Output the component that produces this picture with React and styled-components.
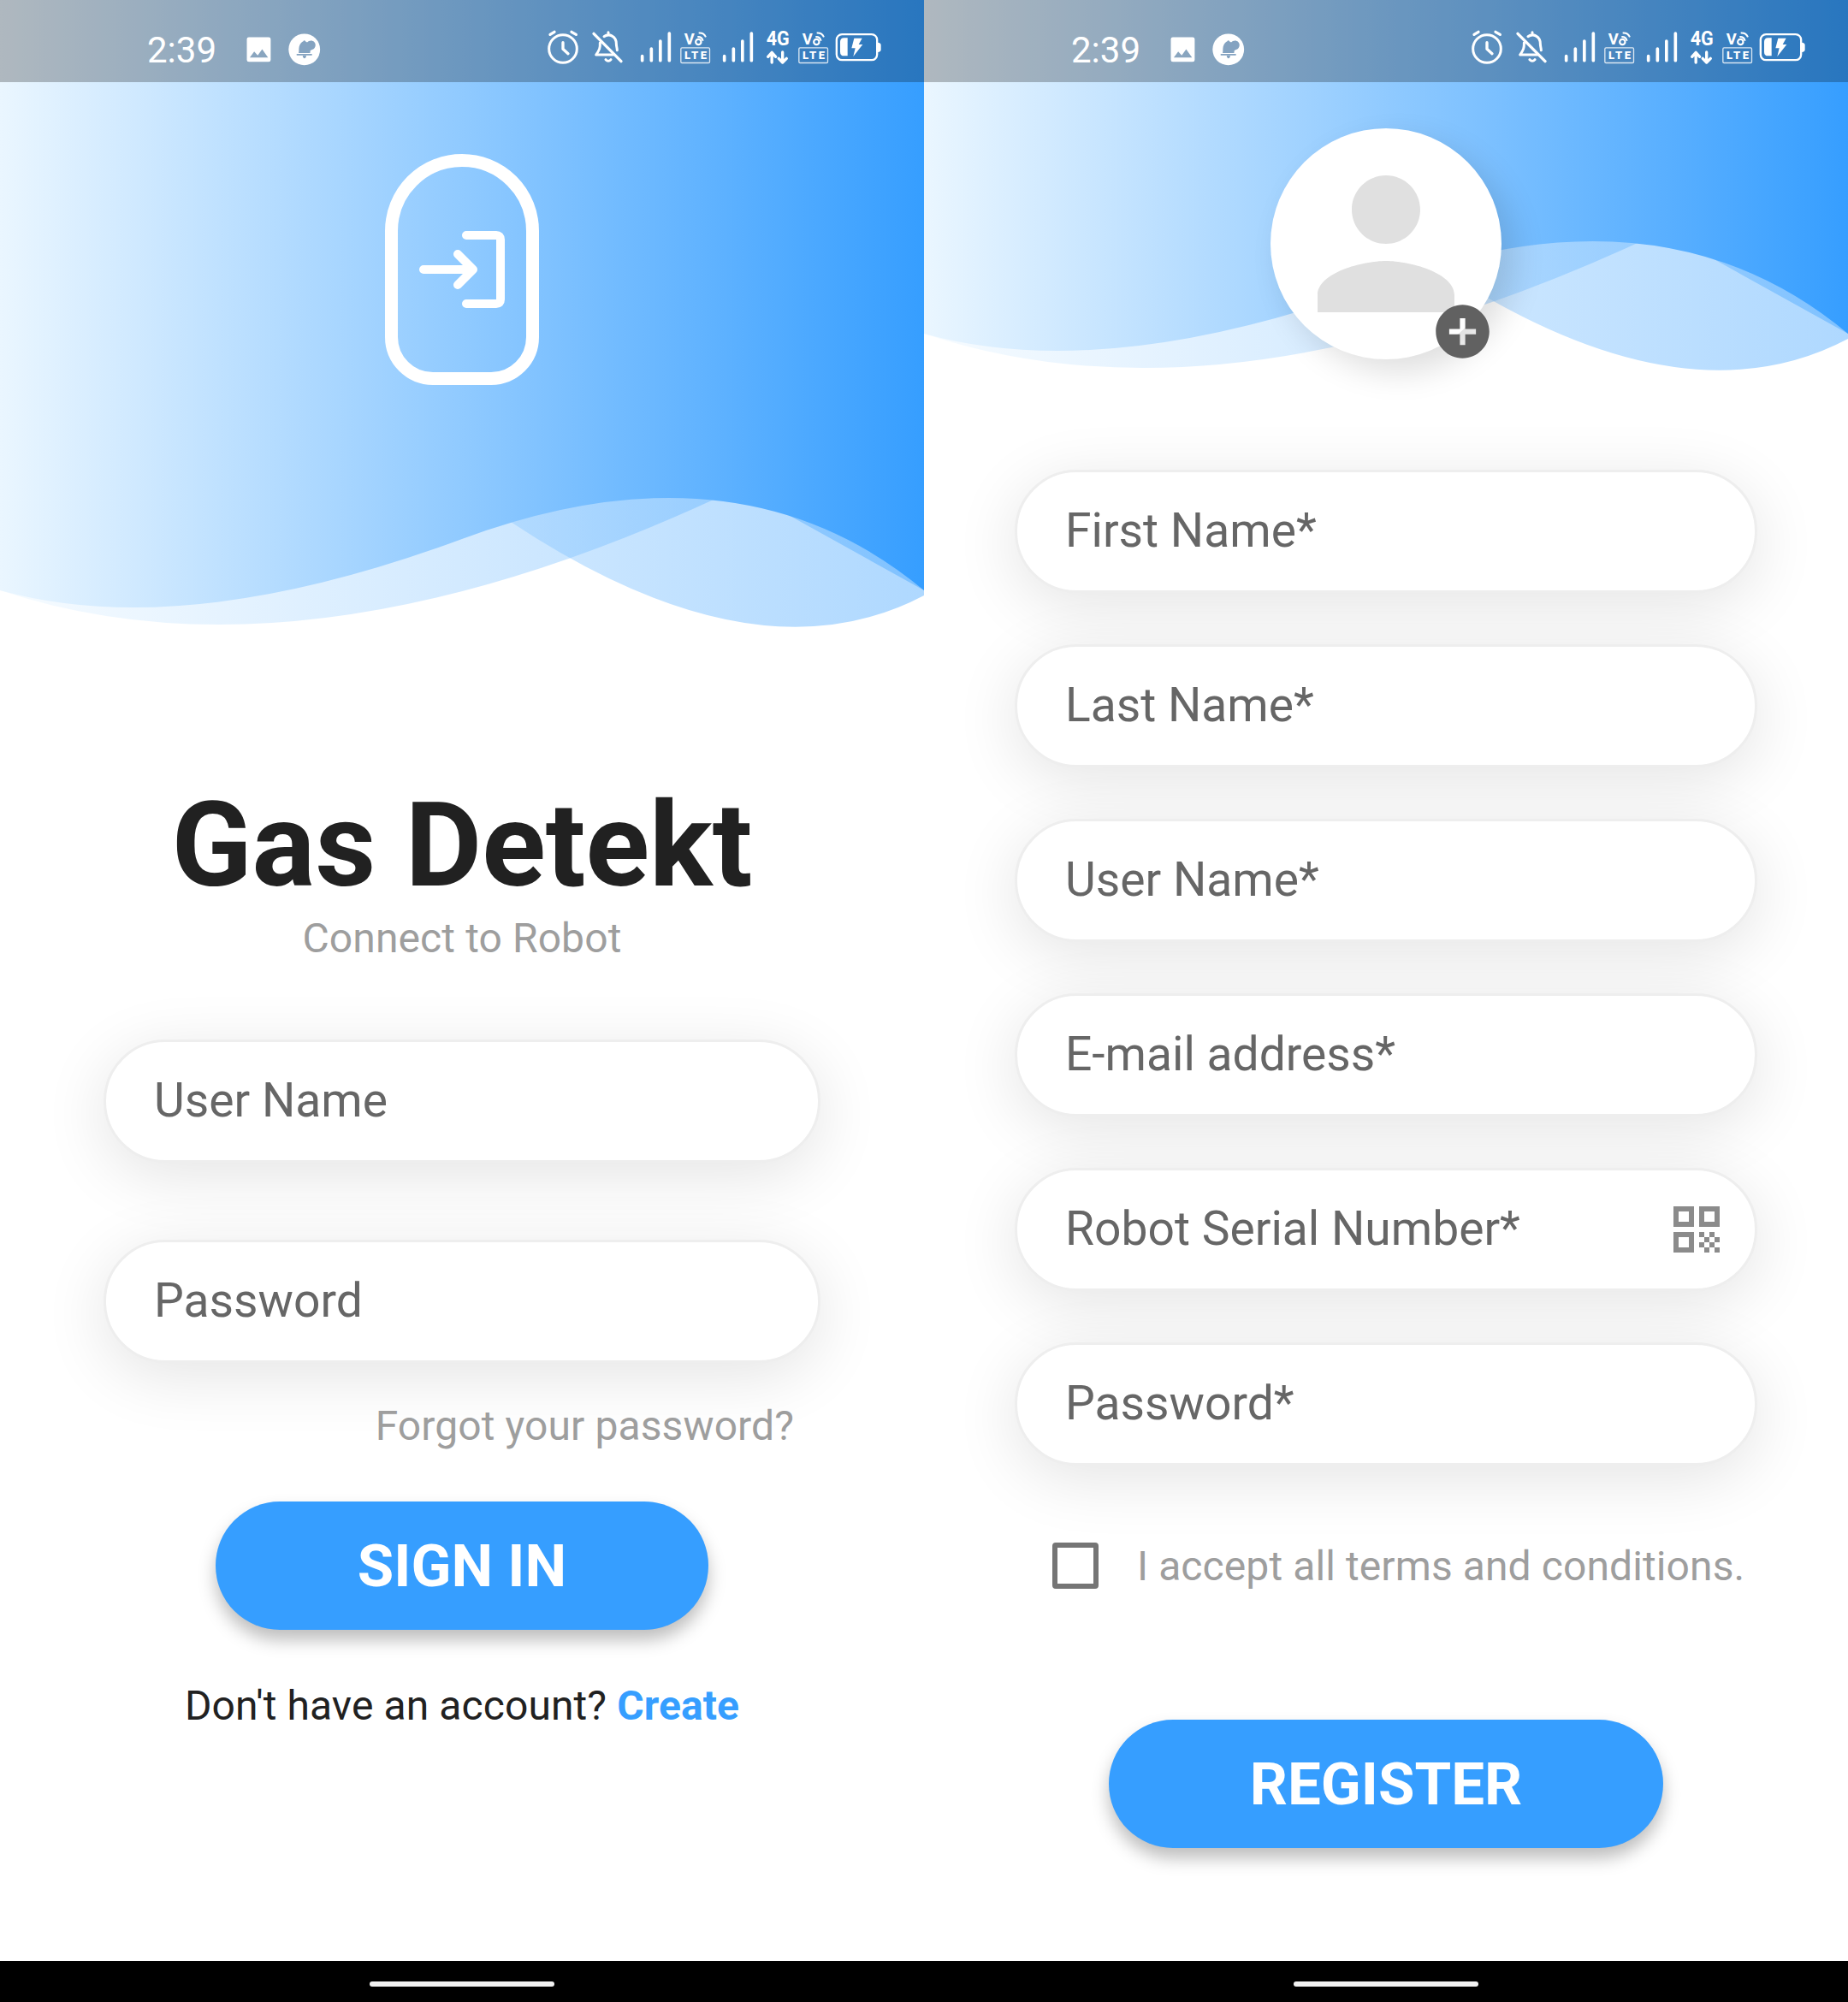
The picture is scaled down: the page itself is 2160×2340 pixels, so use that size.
import React from "react";
import styled, { createGlobalStyle } from "styled-components";

const GlobalStyle = createGlobalStyle`
  *, *::before, *::after { box-sizing: border-box; }
  html, body { margin: 0; padding: 0; background: #fff; }
  body { font-family: Roboto, "Noto Sans", sans-serif; }
`;

const accent = "#369eff";

const Board = styled.main`
  display: grid;
  grid-template-columns: 1080px 1080px;
  width: 2160px;
  height: 2340px;
  overflow: hidden;
`;

const Phone = styled.section`
  display: flex;
  flex-direction: column;
  width: 1080px;
  height: 2340px;
  overflow: hidden;
  background: #fff;
`;

const Header = styled.header`
  position: relative;
  display: flex;
  flex-direction: column;
  align-items: center;
  flex: none;
  height: ${(p) => p.$height}px;
`;

const Waves = styled.svg`
  position: absolute;
  inset: 0;
  width: 100%;
  height: 100%;
`;

const StatusBar = styled.div`
  position: relative;
  display: flex;
  justify-content: space-between;
  align-items: flex-start;
  width: 100%;
  height: 96px;
  padding: 30px 47px 0 172px;
  background: rgba(0, 0, 0, 0.25);
  color: #fff;
`;

const StatusGroup = styled.div`
  display: flex;
  align-items: flex-start;
  height: 52px;
`;

const Clock = styled.span`
  width: 110.5px;
  font-size: 42px;
  line-height: 58px;
  white-space: nowrap;
`;

const Glyph = styled.svg`
  display: block;
  flex: none;
  width: ${(p) => p.$w / 3}px;
  height: 50px;
  overflow: visible;
  font-family: Roboto, sans-serif;
`;

const Notice = styled(Glyph)`
  width: ${(p) => p.$w / 2.904}px;
  height: 51.65px;
  margin-top: 1px;
`;

const LogoBadge = styled.div`
  position: relative;
  display: flex;
  justify-content: center;
  align-items: center;
  width: 180px;
  height: 270px;
  margin-top: 84px;
  border: 15px solid #fff;
  border-radius: 90px 90px 56px 56px;
`;

const LogoIcon = styled.svg`
  display: block;
  width: 120px;
  height: 120px;
`;

const Avatar = styled.div`
  position: relative;
  display: flex;
  justify-content: center;
  width: 270px;
  height: 270px;
  margin-top: 54px;
  padding-top: 15px;
  border-radius: 50%;
  background: #fff;
  box-shadow: 15px 15px 37px rgba(0, 0, 0, 0.13);
`;

const PersonIcon = styled.svg`
  width: 240px;
  height: 240px;
  fill: #e0e0e0;
`;

const AddBadge = styled.svg`
  position: absolute;
  left: 187px;
  top: 200px;
  width: 75px;
  height: 75px;
  fill: #616161;
`;

const Content = styled.div`
  display: flex;
  flex-direction: column;
  align-items: center;
  flex: 1;
  padding-top: ${(p) => p.$top}px;
`;

const Title = styled.h1`
  margin: 0;
  font-size: 138px;
  font-weight: 700;
  line-height: 161px;
  color: #212121;
  white-space: nowrap;
`;

const Caption = styled.p`
  margin: 0;
  font-size: 48px;
  line-height: 56px;
  letter-spacing: 0.1px;
  color: ${(p) => (p.$dark ? "#212121" : "#9e9e9e")};
  white-space: nowrap;
`;

const Forgot = styled(Caption)`
  align-self: flex-end;
  margin: 46px 152px 60px 0;
`;

const Link = styled.span`
  font-weight: 700;
  color: ${accent};
`;

const FieldList = styled.div`
  display: flex;
  flex-direction: column;
  width: ${(p) => p.$width}px;
  gap: ${(p) => p.$gap}px;
  margin-top: ${(p) => p.$top || 0}px;
`;

const Field = styled.label`
  display: flex;
  align-items: center;
  justify-content: space-between;
  height: 144px;
  padding: 0 30px 3px 56px;
  border: 3px solid #eee;
  border-radius: 72px;
  background: #fff;
  box-shadow: 0 15px 76px rgba(0, 0, 0, 0.11);
  font-size: 55.2px;
  color: #666;
  white-space: nowrap;
`;

const QrIcon = styled.svg`
  width: 72px;
  height: 72px;
  margin: 3px 2px 0 0;
  fill: #8b8b8b;
`;

const Button = styled.button`
  width: ${(p) => p.$width}px;
  height: 150px;
  padding: 0;
  border: 0;
  border-radius: 75px;
  background: ${accent};
  box-shadow: 0 12px 20px rgba(0, 0, 0, 0.26);
  font-family: inherit;
  font-size: 69px;
  font-weight: 700;
  color: #fff;
`;

const Terms = styled.label`
  display: flex;
  align-items: center;
  align-self: flex-start;
  gap: 45px;
  height: 54px;
  margin: 90px 0 153px 150px;
`;

const TermsText = styled(Caption)`
  padding-top: 2px;
`;

const Checkbox = styled.span`
  width: 54px;
  height: 54px;
  border: 6px solid #757575;
  border-radius: 4px;
`;

const SignUp = styled(Caption)`
  margin-top: 61px;
`;

const NavBar = styled.footer`
  display: flex;
  justify-content: center;
  align-items: center;
  flex: none;
  height: 48px;
  padding-top: 5px;
  background: #000;
`;

const Handle = styled.span`
  width: 216px;
  height: 6px;
  border-radius: 3px;
  background: #f2f2f2;
`;

function SignalIcon() {
  return (
    <Glyph $w={155} viewBox="415 90 155 150">
      <path
        d="M453 197V212M485 171V212M516.500 144V212M548 117V212"
        stroke="#fff"
        strokeWidth="11"
        strokeLinecap="round"
      />
    </Glyph>
  );
}

function VolteIcon() {
  return (
    <Glyph $w={133} viewBox="570 90 133 150" fill="#fff">
      <text x="599" y="157" fontSize="55" fontWeight="700" textLength="36" lengthAdjust="spacingAndGlyphs">V</text>
      <circle cx="649" cy="147" r="9.500" fill="none" stroke="#fff" strokeWidth="6.500" />
      <path d="M646 129Q661 128 665 143M650 115.500Q668 114 675 130" fill="none" stroke="#fff" strokeWidth="6" />
      <rect x="587.500" y="167.500" width="101" height="53" rx="4" fill="none" stroke="#fff" strokeOpacity=".8" strokeWidth="4" />
      <text x="600" y="207" fontSize="39" fontWeight="900" textLength="78">LTE</text>
    </Glyph>
  );
}

function SystemStatus() {
  return (
    <StatusBar>
      <StatusGroup>
        <Clock>2:39</Clock>
        <Notice $w={133} viewBox="820 90 133 150">
          <path
            fill="#fff"
            fillRule="evenodd"
            d="M843 126h67a7 7 0 0 1 7 7v70a7 7 0 0 1-7 7h-67a7 7 0 0 1-7-7v-70a7 7 0 0 1 7-7zM846 195h62l-20-28-15 21-12-13z"
          />
        </Notice>
        <Notice $w={140} viewBox="953 90 140 150">
          <circle cx="1033.500" cy="168" r="53.500" fill="#fff" />
          <g fill="#84a3c1">
            <path d="M1014 180c2-6 0-13 2-22 3-11 9-16 14-18 1-4 6-4 7 0l6 4c6-8 18-8 24-2 7 7 5 18-2 24l-11 5-1 9z" />
            <rect x="1007" y="183" width="53" height="5" rx="2" />
            <path d="M1028 189h12c0 12-12 12-12 0z" />
          </g>
        </Notice>
      </StatusGroup>
      <StatusGroup>
        <Glyph $w={140} viewBox="115 90 140 150" fill="none" stroke="#fff" strokeLinecap="round" strokeLinejoin="round">
          <circle cx="175" cy="171" r="49" strokeWidth="9" />
          <path d="M175 149V172L193 188M130 121L145 112M205 112L221 121" strokeWidth="10" />
        </Glyph>
        <Glyph $w={160} viewBox="255 90 160 150" fill="none" stroke="#fff" strokeLinecap="round" strokeLinejoin="round">
          <path d="M282 118L378 215" strokeWidth="10" />
          <path d="M333 113V121M318 128C336 115 361 128 361 153C361 163 364 168 364 176M304 150C305 168 302 175 290 192H350M324 209Q333 219 342 209" strokeWidth="9" />
        </Glyph>
        <SignalIcon />
        <VolteIcon />
        <SignalIcon />
        <Glyph $w={126} viewBox="858 90 126 150" fill="#fff">
          <text x="887" y="158" fontSize="70" fontWeight="700" textLength="81" lengthAdjust="spacingAndGlyphs">4G</text>
          <path
            d="M906.500 219V185M893 199L906.500 184L920 199M944 183V218M930.500 205L944 219L958 205"
            fill="none"
            stroke="#fff"
            strokeWidth="10"
            strokeLinecap="round"
            strokeLinejoin="round"
          />
        </Glyph>
        <VolteIcon />
        <Glyph $w={183} viewBox="1117 90 183 150" fill="#fff">
          <rect x="1134.500" y="120.500" width="142" height="90" rx="19" fill="none" stroke="#fff" strokeWidth="7" />
          <path d="M1279 149q11 1 11 9v16q0 8-11 9z" />
          <path d="M1173 133v63h-12q-14 0-14-14v-35q0-14 14-14z" />
          <path d="M1196 134h28l-12 22h14l-33 42 7-29h-13z" />
        </Glyph>
      </StatusGroup>
    </StatusBar>
  );
}

/* level is the height at which every wave starts on the left edge. */
function WaveBackdrop({ id, level, height }) {
  const y = (dy) => level + dy;
  const fill = `url(#${id})`;
  return (
    <Waves viewBox={`0 0 1080 ${height}`} preserveAspectRatio="none" aria-hidden="true">
      <defs>
        <linearGradient id={id} gradientUnits="userSpaceOnUse" x1="0" y1="0" x2="1080" y2="0">
          <stop offset="0" stopColor="#eaf6ff" />
          <stop offset="1" stopColor={accent} />
        </linearGradient>
      </defs>
      <path
        fill={fill}
        fillOpacity=".4"
        d={`M0 0V${y(0)}Q360 ${y(120)} 864 ${y(-120)}L1080 ${y(0)}V0Z`}
      />
      <path
        fill={fill}
        fillOpacity=".4"
        d={`M0 0V${y(-60)}Q216 ${y(-60)} 540 ${y(-120)}Q864 ${y(120)} 1080 ${y(6)}V0Z`}
      />
      <path
        fill={fill}
        d={`M0 0V${y(0)}Q216 ${y(60)} 540 ${y(-60)}Q864 ${y(-180)} 1080 ${y(0)}V0Z`}
      />
    </Waves>
  );
}

function SignInScreen() {
  return (
    <Phone>
      <Header $height={750}>
        <WaveBackdrop id="signInGradient" level={690} height={750} />
        <SystemStatus />
        <LogoBadge>
          <LogoIcon viewBox="0 0 120 120" fill="none" stroke="#fff" strokeWidth="10" strokeLinecap="round">
            <path d="M65 20H100Q105 20 105 25V95Q105 100 100 100H65" />
            <path d="M15 60H70M55 42L73 60L55 78" strokeLinejoin="round" />
          </LogoIcon>
        </LogoBadge>
      </Header>
      <Content $top={158}>
        <Title>Gas Detekt</Title>
        <Caption>Connect to Robot</Caption>
        <FieldList $width={838} $gap={90} $top={90}>
          <Field>User Name</Field>
          <Field>Password</Field>
        </FieldList>
        <Forgot>Forgot your password?</Forgot>
        <Button $width={576}>SIGN IN</Button>
        <SignUp $dark>
          Don't have an account? <Link>Create</Link>
        </SignUp>
      </Content>
      <NavBar>
        <Handle />
      </NavBar>
    </Phone>
  );
}

function RegisterScreen() {
  return (
    <Phone>
      <Header $height={450}>
        <WaveBackdrop id="registerGradient" level={390} height={450} />
        <SystemStatus />
        <Avatar>
          <PersonIcon viewBox="0 0 24 24">
            <path d="M12 12c2.210 0 4-1.790 4-4s-1.790-4-4-4-4 1.790-4 4 1.790 4 4 4zm0 2c-2.670 0-8 1.340-8 4v2h16v-2c0-2.660-5.330-4-8-4z" />
          </PersonIcon>
          <AddBadge viewBox="0 0 24 24">
            <path d="M12 2C6.480 2 2 6.480 2 12s4.480 10 10 10 10-4.480 10-10S17.520 2 12 2zm5 11h-4v4h-2v-4H7v-2h4V7h2v4h4v2z" />
          </AddBadge>
        </Avatar>
      </Header>
      <Content $top={99}>
        <FieldList $width={868} $gap={60}>
          <Field>First Name*</Field>
          <Field>Last Name*</Field>
          <Field>User Name*</Field>
          <Field>E-mail address*</Field>
          <Field>
            Robot Serial Number*
            <QrIcon viewBox="0 0 24 24">
              <path d="M3 11h8V3H3v8zm2-6h4v4H5V5zM3 21h8v-8H3v8zm2-6h4v4H5v-4zM13 3v8h8V3h-8zm6 6h-4V5h4v4zM19 19h2v2h-2zM13 13h2v2h-2zM15 15h2v2h-2zM13 17h2v2h-2zM15 19h2v2h-2zM17 17h2v2h-2zM17 13h2v2h-2zM19 15h2v2h-2z" />
            </QrIcon>
          </Field>
          <Field>Password*</Field>
        </FieldList>
        <Terms>
          <Checkbox />
          <TermsText as="span">I accept all terms and conditions.</TermsText>
        </Terms>
        <Button $width={648}>REGISTER</Button>
      </Content>
      <NavBar>
        <Handle />
      </NavBar>
    </Phone>
  );
}

export default function App() {
  return (
    <>
      <GlobalStyle />
      <Board>
        <SignInScreen />
        <RegisterScreen />
      </Board>
    </>
  );
}
